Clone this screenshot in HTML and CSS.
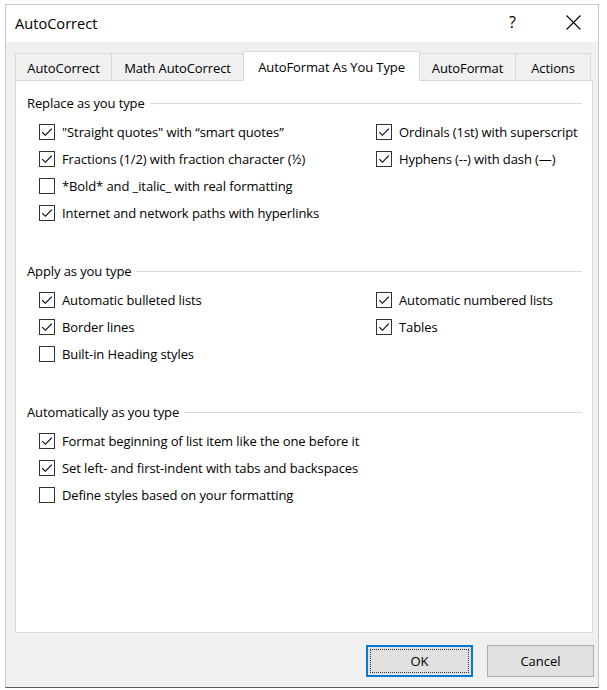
FILE: index.html
```html
<!DOCTYPE html>
<html>
<head>
<meta charset="utf-8">
<link rel="stylesheet" href="styles.css">
</head>
<body>
<div class="window">
  <div class="titlebar">
    <div class="title">AutoCorrect</div>
    <div class="help">?</div>
    <svg class="close" width="15" height="15" viewBox="0 0 15 15"><path d="M0.5 0.5 L14.5 14.5 M14.5 0.5 L0.5 14.5" stroke="#000" stroke-width="1.1" fill="none"/></svg>
  </div>
  <div class="content">
    <div class="tabs">
      <div class="tab t1">AutoCorrect</div>
      <div class="tab t2">Math AutoCorrect</div>
      <div class="tab t3 active">AutoFormat As You Type</div>
      <div class="tab t4">AutoFormat</div>
      <div class="tab t5">Actions</div>
    </div>
    <div class="panel">
      <div class="group">
        <div class="heading"><span>Replace as you type</span><i class="rule"></i></div>
        <div class="grid">
          <label class="item"><span class="box"><svg class="tick" viewBox="0 0 14 14"><path d="M2.3 7.2 L5.4 10.3 L11.8 3.6"/></svg></span>"Straight quotes" with “smart quotes”</label>
          <label class="item"><span class="box"><svg class="tick" viewBox="0 0 14 14"><path d="M2.3 7.2 L5.4 10.3 L11.8 3.6"/></svg></span>Ordinals (1st) with superscript</label>
          <label class="item"><span class="box"><svg class="tick" viewBox="0 0 14 14"><path d="M2.3 7.2 L5.4 10.3 L11.8 3.6"/></svg></span>Fractions (1/2) with fraction character (½)</label>
          <label class="item"><span class="box"><svg class="tick" viewBox="0 0 14 14"><path d="M2.3 7.2 L5.4 10.3 L11.8 3.6"/></svg></span>Hyphens (--) with dash (—)</label>
          <label class="item"><span class="box"></span>*Bold* and _italic_ with real formatting</label>
          <div></div>
          <label class="item"><span class="box"><svg class="tick" viewBox="0 0 14 14"><path d="M2.3 7.2 L5.4 10.3 L11.8 3.6"/></svg></span>Internet and network paths with hyperlinks</label>
          <div></div>
        </div>
      </div>
      <div class="group">
        <div class="heading"><span>Apply as you type</span><i class="rule"></i></div>
        <div class="grid">
          <label class="item"><span class="box"><svg class="tick" viewBox="0 0 14 14"><path d="M2.3 7.2 L5.4 10.3 L11.8 3.6"/></svg></span>Automatic bulleted lists</label>
          <label class="item"><span class="box"><svg class="tick" viewBox="0 0 14 14"><path d="M2.3 7.2 L5.4 10.3 L11.8 3.6"/></svg></span>Automatic numbered lists</label>
          <label class="item"><span class="box"><svg class="tick" viewBox="0 0 14 14"><path d="M2.3 7.2 L5.4 10.3 L11.8 3.6"/></svg></span>Border lines</label>
          <label class="item"><span class="box"><svg class="tick" viewBox="0 0 14 14"><path d="M2.3 7.2 L5.4 10.3 L11.8 3.6"/></svg></span>Tables</label>
          <label class="item"><span class="box"></span>Built-in Heading styles</label>
          <div></div>
        </div>
      </div>
      <div class="group">
        <div class="heading"><span>Automatically as you type</span><i class="rule"></i></div>
        <div class="list">
          <label class="item"><span class="box"><svg class="tick" viewBox="0 0 14 14"><path d="M2.3 7.2 L5.4 10.3 L11.8 3.6"/></svg></span>Format beginning of list item like the one before it</label>
          <label class="item"><span class="box"><svg class="tick" viewBox="0 0 14 14"><path d="M2.3 7.2 L5.4 10.3 L11.8 3.6"/></svg></span>Set left- and first-indent with tabs and backspaces</label>
          <label class="item"><span class="box"></span>Define styles based on your formatting</label>
        </div>
      </div>
    </div>
    <div class="buttons">
      <button class="btn ok"><span class="focus">OK</span></button>
      <button class="btn">Cancel</button>
    </div>
  </div>
</div>
</body>
</html>
```

FILE: styles.css
```css
* { box-sizing: border-box; }
html, body { margin: 0; padding: 0; background: #ffffff; }
body {
  font-family: "Open Sans", "Noto Sans", sans-serif;
  font-size: 13px;
  letter-spacing: -0.1px;
  color: #000;
  width: 607px;
  height: 690px;
  overflow: hidden;
}
.window {
  margin: 4px 0 0 5px;
  width: 594px;
  height: 684px;
  border: 1px solid #c9c9c9;
  border-bottom: 1px solid #5a5a5a;
  background: #f0f0f0;
  display: flex;
  flex-direction: column;
}
.titlebar {
  height: 37px;
  background: #ffffff;
  display: flex;
  align-items: center;
  padding-left: 9px;
  flex: none;
}
.title {
  font-size: 14.6px;
  letter-spacing: 0;
  flex: 1;
  margin-top: -1px;
}
.help {
  font-size: 16px;
  width: 10px;
  margin-right: 47px;
  margin-top: -3px;
  color: #000;
}
.close {
  margin-right: 17px;
  margin-top: -2px;
}
.content {
  flex: 1;
  display: flex;
  flex-direction: column;
  padding: 11px 0 0 9px;
}
.tabs {
  display: flex;
  height: 27px;
  align-items: flex-end;
  position: relative;
  z-index: 1;
}
.tab {
  height: 27px;
  border: 1px solid #d9d9d9;
  border-bottom: none;
  border-right: none;
  background: #f0f0f0;
  display: flex;
  align-items: center;
  justify-content: center;
  padding-top: 1px;
}
.tab.t5 { border-right: 1px solid #d9d9d9; }
.t1 { width: 96px; }
.t2 { width: 132px; }
.t3 { width: 177px; }
.t4 { width: 95px; }
.t5 { width: 76px; }
.tab.active {
  height: 30px;
  background: #ffffff;
  border-right: 1px solid #d9d9d9;
  margin-bottom: -1px;
  padding-top: 0;
}
.tab.active + .tab { border-left: none; }
.panel {
  width: 578px;
  height: 553px;
  background: #ffffff;
  border: 1px solid #d9d9d9;
  padding: 8px 10px 0 11px;
  flex: none;
}
.group + .group { margin-top: 31px; }
.heading {
  height: 29px;
  display: flex;
  align-items: center;
  padding-bottom: 2px;
}
.heading span { white-space: nowrap; }
.rule {
  flex: 1;
  height: 1px;
  background: #dcdcdc;
  margin-left: 5px;
  margin-top: 2px;
}
.grid {
  display: grid;
  grid-template-columns: 337px 1fr;
  grid-auto-rows: 27px;
}
.list {
  display: grid;
  grid-auto-rows: 27px;
}
.item {
  display: flex;
  align-items: center;
  padding-left: 12px;
  white-space: nowrap;
}
.box {
  width: 16px;
  height: 16px;
  border: 1px solid #333333;
  background: #ffffff;
  margin-right: 7px;
  flex: none;
  display: flex;
}
.tick {
  width: 14px;
  height: 14px;
  fill: none;
  stroke: #000;
  stroke-width: 1.15;
}
.buttons {
  display: flex;
  justify-content: flex-end;
  gap: 14px;
  padding-right: 4px;
  margin-top: 12px;
}
.btn {
  width: 107px;
  height: 32px;
  background: #e1e1e1;
  border: 1px solid #adadad;
  font-family: "Open Sans", "Noto Sans", sans-serif;
  font-size: 13px;
  color: #000;
  padding: 0;
  display: flex;
  align-items: center;
  justify-content: center;
}
.btn.ok {
  border: 2px solid #0078d7;
  padding: 2px;
}
.focus {
  width: 100%;
  height: 100%;
  border: 1px dotted #333;
  display: flex;
  align-items: center;
  justify-content: center;
}
```
